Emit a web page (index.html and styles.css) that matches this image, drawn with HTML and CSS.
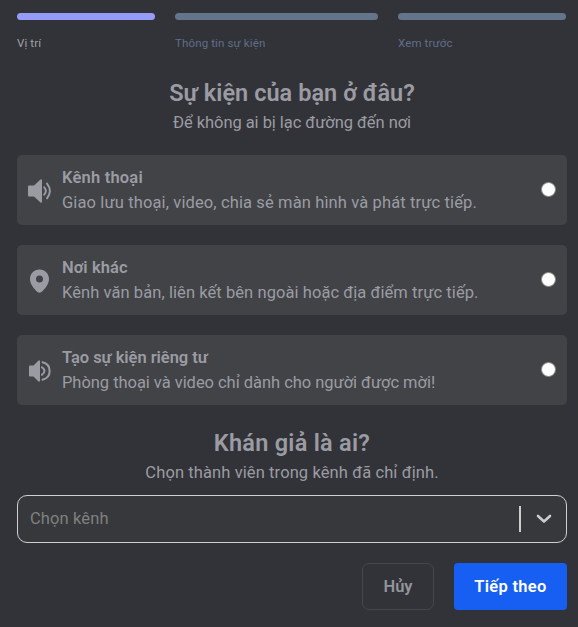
FILE: index.html
```html
<!DOCTYPE html>
<html lang="vi">
<head>
<meta charset="utf-8">
<title>Sự kiện</title>
<link rel="stylesheet" href="styles.css">
</head>
<body>
<main class="modal">
  <ol class="steps">
    <li class="step active"><span class="bar"></span><span class="label">Vị trí</span></li>
    <li class="step"><span class="bar"></span><span class="label">Thông tin sự kiện</span></li>
    <li class="step"><span class="bar"></span><span class="label">Xem trước</span></li>
  </ol>

  <header class="heading">
    <h2>Sự kiện của bạn ở đâu?</h2>
    <p>Để không ai bị lạc đường đến nơi</p>
  </header>

  <div class="options">
    <label class="option voice">
      <svg class="icon" viewBox="0 0 24 24"><path fill="currentColor" d="M1 6.500h5L12.500 0.500h1.500v23h-1.500L6 17.500H1q-1 0-1-1v-9q0-1 1-1z"/><path fill="none" stroke="currentColor" stroke-width="1.900" stroke-linecap="round" d="M16.200 8.300q3.300 3.500 0 7.400M19 4.600q5.800 7.300 0 14.700"/></svg>
      <span class="copy"><strong>Kênh thoại</strong><span>Giao lưu thoại, video, chia sẻ màn hình và phát trực tiếp.</span></span>
      <input type="radio" name="place">
    </label>
    <label class="option elsewhere">
      <svg class="icon" viewBox="0 0 24 24"><path fill="currentColor" fill-rule="evenodd" d="M11.500 0.500C6.200 0.500 2 4.500 2 10c0 5.500 4.500 10.300 7.500 13q2 1.500 4 0c3-2.700 7.500-7.500 7.500-13 0-5.500-4.200-9.500-9.500-9.500zM11.500 6.500a3.500 3.500 0 1 1 0 7a3.500 3.500 0 0 1 0-7z"/></svg>
      <span class="copy"><strong>Nơi khác</strong><span>Kênh văn bản, liên kết bên ngoài hoặc địa điểm trực tiếp.</span></span>
      <input type="radio" name="place">
    </label>
    <label class="option private">
      <svg class="icon" viewBox="0 0 24 24"><path fill="currentColor" d="M2 6.500h3.500L10.500 1.500h1.500v21h-1.500L5.500 17.500H2q-1 0-1-1v-9q0-1 1-1z"/><path fill="none" stroke="currentColor" stroke-width="2" stroke-linecap="round" d="M14 8.200q5 3.800 0 7.600M14.500 3.300c9.500 2.300 9.500 15.100 0 17.400"/></svg>
      <span class="copy"><strong>Tạo sự kiện riêng tư</strong><span>Phòng thoại và video chỉ dành cho người được mời!</span></span>
      <input type="radio" name="place">
    </label>
  </div>

  <header class="heading audience">
    <h2>Khán giả là ai?</h2>
    <p>Chọn thành viên trong kênh đã chỉ định.</p>
  </header>

  <div class="select">
    <span class="placeholder">Chọn kênh</span>
    <span class="separator"></span>
    <svg class="chevron" viewBox="0 0 16 10"><path d="M2 2l6 5.500L14 2"/></svg>
  </div>

  <footer class="actions">
    <button class="cancel">Hủy</button>
    <button class="next">Tiếp theo</button>
  </footer>
</main>
</body>
</html>
```
FILE: styles.css
```css
* { box-sizing: border-box; }
body {
  margin: 0;
  height: 627px;
  overflow: hidden;
  background: #323338;
  color: #9b9ca3;
  font: 16.5px/25px Roboto, sans-serif;
}
.modal { padding: 13px 11px 0 17px; }
.steps {
  display: grid;
  grid-template-columns: 138px 203px 168px;
  gap: 20px;
  margin: 0;
  padding: 0;
  list-style: none;
}
.step { color: #5f6f89; }
.bar { display: block; height: 7px; border-radius: 4px; background: #64748b; }
.label { display: inline-block; margin-top: 15px; font-size: 11.5px; line-height: 16px; letter-spacing: 0.13px; white-space: nowrap; }
.active { color: #a0a1a8; }
.active .bar { background: #949cf7; }
.heading { margin-top: 23px; height: 68px; text-align: center; white-space: nowrap; }
.heading h2 { margin: 0; font-size: 23.5px; line-height: 32px; font-weight: 600; letter-spacing: 0.05px; }
.heading p { margin: 0; line-height: 27px; letter-spacing: -0.05px; }
.options { display: grid; gap: 20px; margin-top: 10px; }
.option {
  display: flex;
  align-items: center;
  height: 70px;
  padding: 0 11px;
  border-radius: 5px;
  background: #424347;
}
.icon { width: 24px; height: 24px; flex: none; margin-top: 2px; }
.copy { display: flex; flex-direction: column; align-items: flex-start; margin: 0 0 0 10px; white-space: nowrap; }
.copy strong { font-weight: 600; }
.voice .copy { letter-spacing: 0.12px; }
.voice strong { letter-spacing: 0.2px; }
.elsewhere .copy { letter-spacing: 0.07px; }
.private .copy { letter-spacing: -0.04px; }
.option input {
  appearance: none;
  flex: none;
  width: 15px;
  height: 15px;
  margin: -2px 0 0 auto;
  border: 1px solid #858585;
  border-radius: 50%;
  background: #fff;
}
.audience { margin-top: 22px; height: 62px; }
.audience h2 { letter-spacing: 0.27px; }
.audience p { letter-spacing: 0.1px; }
.select {
  display: flex;
  align-items: center;
  height: 48px;
  margin-top: 6px;
  padding: 0 14px 0 12px;
  border: 1px solid #d0d0d2;
  border-radius: 10px;
  background: #37383b;
  color: #808080;
}
.placeholder { margin-top: -2px; letter-spacing: 0.12px; }
.separator { width: 2px; height: 26px; margin-left: auto; background: #ccc; }
.chevron { width: 16px; height: 10px; margin-left: 15px; }
.chevron path { fill: none; stroke: #ccc; stroke-width: 2.600; stroke-linecap: round; stroke-linejoin: round; }
.actions { display: flex; justify-content: flex-end; gap: 20px; margin-top: 20px; }
.actions button { height: 47px; padding: 0; font: 600 16.500px Roboto, sans-serif; white-space: nowrap; }
.cancel { width: 72px; border: 1px solid #46474c; border-radius: 7px; background: transparent; color: #94959b; }
.actions .next { width: 113px; border: 0; border-radius: 4px; background: #175ff2; color: #fff; letter-spacing: 0.3px; }
```
